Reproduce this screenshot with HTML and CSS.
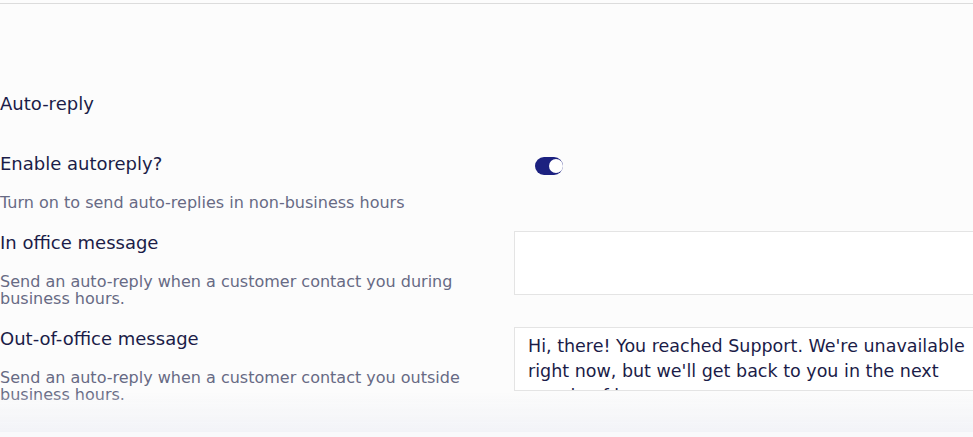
FILE: index.html
```html
<!DOCTYPE html>
<html lang="en">
<head>
  <meta charset="UTF-8" />
  <title>Auto-reply settings</title>
  <link rel="stylesheet" href="styles.css">
</head>
<body>
  <div class="topbar"></div>

  <section class="settings">
    <h2 class="section-title">Auto-reply</h2>

    <div class="row">
      <div class="info">
        <h3>Enable autoreply?</h3>
        <p>Turn on to send auto-replies in non-business hours</p>
      </div>
      <div class="control">
        <label class="toggle">
          <input type="checkbox" checked>
          <span class="track"></span>
        </label>
      </div>
    </div>

    <div class="row">
      <div class="info">
        <h3>In office message</h3>
        <p>Send an auto-reply when a customer contact you during business hours.</p>
      </div>
      <div class="control">
        <textarea class="message"></textarea>
      </div>
    </div>

    <div class="row">
      <div class="info">
        <h3>Out-of-office message</h3>
        <p>Send an auto-reply when a customer contact you outside business hours.</p>
      </div>
      <div class="control">
        <textarea class="message">Hi, there! You reached Support. We're unavailable right now, but we'll get back to you in the next couple of hours.</textarea>
      </div>
    </div>
  </section>

  <div class="fade"></div>
</body>
</html>
```

FILE: styles.css
```css
body {
  margin: 0;
  background-color: #fcfcfc;
  font-family: 'DejaVu Sans', sans-serif;
  color: #1b1c48;
  overflow: hidden;
}
.topbar {
  height: 3px;
  border-bottom: 1px solid #dcdcdc;
}
.settings { padding-top: 88px; }
.section-title {
  margin: 0 0 36px;
  font-size: 18px;
  font-weight: 400;
  line-height: 24px;
}
.row {
  display: grid;
  grid-template-columns: 514px 1fr;
  margin-bottom: 20px;
}
.info h3 {
  margin: 0;
  font-size: 18px;
  font-weight: 400;
  line-height: 24px;
}
.info p {
  margin: 18px 0 0;
  font-size: 16px;
  line-height: 17px;
  color: #676a84;
  padding-right: 40px;
}
.control { min-width: 0; }
.toggle {
  display: inline-block;
  margin: 5px 0 0 21px;
}
.toggle input { display: none; }
.track {
  display: block;
  position: relative;
  width: 28px;
  height: 18px;
  border-radius: 9px;
  background-color: #1c2180;
}
.track::after {
  content: "";
  position: absolute;
  right: 0;
  top: 2px;
  width: 14px;
  height: 14px;
  border-radius: 50%;
  background-color: #fff;
}
.message {
  display: block;
  box-sizing: border-box;
  width: 480px;
  height: 64px;
  padding: 6px 13px;
  border: 1px solid #e4e4e4;
  background-color: #fff;
  font-family: inherit;
  font-size: 17.5px;
  line-height: 25px;
  color: #1b1c48;
  resize: none;
  overflow: hidden;
  outline: none;
}
.fade {
  position: fixed;
  left: 0;
  right: 0;
  bottom: 0;
  height: 40px;
  background: linear-gradient(rgba(242, 243, 247, 0), #f2f3f7);
  border-bottom: 5px solid #f9f9fb;
}
```
